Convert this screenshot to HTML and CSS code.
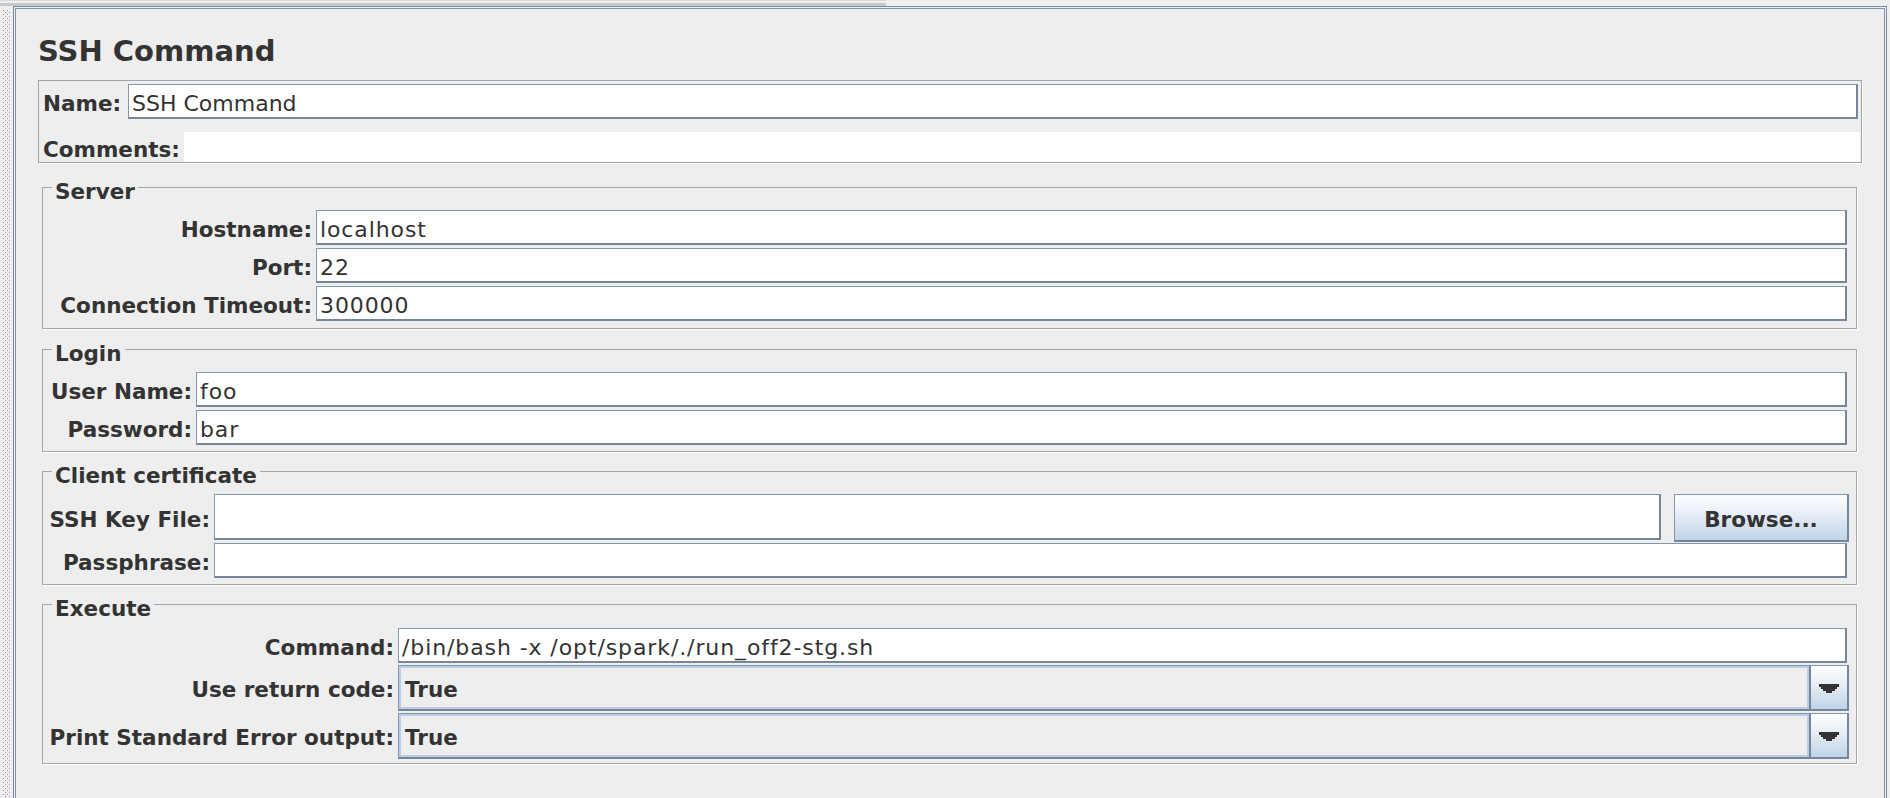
FILE: index.html
```html
<!DOCTYPE html>
<html lang="en">
<head>
<meta charset="utf-8">
<title>SSH Command</title>
<link rel="stylesheet" href="styles.css">
</head>
<body>
<div class="app">
  <div class="topstrip"><div class="thumb"></div></div>
  <div class="main">
    <div class="grip">
      <svg class="grip-dots" width="8" height="800" viewBox="0 0 8 800" aria-hidden="true">
        <defs>
          <pattern id="dots" width="4" height="4" patternUnits="userSpaceOnUse">
            <rect x="0" y="0" width="1" height="1" fill="#8a9bb0"/>
            <rect x="2" y="2" width="1" height="1" fill="#8a9bb0"/>
          </pattern>
        </defs>
        <rect x="0" y="0" width="8" height="800" fill="url(#dots)"/>
      </svg>
    </div>
    <div class="panel">
      <h1 class="title">SSH Command</h1>
      <div class="namebox">
        <div class="namerow">
          <div class="lbl lbl-left name-lbl">Name:</div>
          <div class="field field-name">SSH Command</div>
        </div>
        <div class="commentsrow">
          <div class="lbl lbl-left comments-lbl">Comments:</div>
          <div class="textarea"></div>
        </div>
      </div>

      <fieldset class="group group-server">
        <legend>Server</legend>
        <div class="grid">
          <div class="lbl">Hostname:</div><div class="field">localhost</div>
          <div class="lbl">Port:</div><div class="field">22</div>
          <div class="lbl">Connection Timeout:</div><div class="field">300000</div>
        </div>
      </fieldset>

      <fieldset class="group group-login">
        <legend>Login</legend>
        <div class="grid">
          <div class="lbl">User Name:</div><div class="field">foo</div>
          <div class="lbl">Password:</div><div class="field">bar</div>
        </div>
      </fieldset>

      <fieldset class="group group-cert">
        <legend>Client certificate</legend>
        <div class="grid">
          <div class="lbl lbl-center">SSH Key File:</div>
          <div class="keyrow">
            <div class="field field-tall"></div>
            <button class="btn" type="button">Browse...</button>
          </div>
          <div class="lbl">Passphrase:</div><div class="field"></div>
        </div>
      </fieldset>

      <fieldset class="group group-exec">
        <legend>Execute</legend>
        <div class="grid">
          <div class="lbl">Command:</div><div class="field">/bin/bash -x /opt/spark/./run_off2-stg.sh</div>
          <div class="lbl">Use return code:</div>
          <div class="combo">
            <div class="combo-value">True</div>
            <div class="combo-arrow">
              <svg width="20" height="9" viewBox="0 0 20 9" aria-hidden="true"><path d="M0 0H20V3H18V5H16V7H13V9H7V7H4V5H2V3H0Z" fill="#333"/></svg>
            </div>
          </div>
          <div class="lbl">Print Standard Error output:</div>
          <div class="combo">
            <div class="combo-value">True</div>
            <div class="combo-arrow">
              <svg width="20" height="9" viewBox="0 0 20 9" aria-hidden="true"><path d="M0 0H20V3H18V5H16V7H13V9H7V7H4V5H2V3H0Z" fill="#333"/></svg>
            </div>
          </div>
        </div>
      </fieldset>
    </div>
  </div>
</div>
</body>
</html>
```

FILE: styles.css
```css
* { box-sizing: border-box; }

html, body {
  margin: 0;
  padding: 0;
}

body {
  width: 1890px;
  height: 798px;
  overflow: hidden;
  background: #eeeeee;
  color: #333333;
  font-family: "DejaVu Sans", "Liberation Sans", sans-serif;
}

.topstrip {
  height: 6px;
}

.thumb {
  width: 886px;
  height: 6px;
  background: linear-gradient(#dcdcdc 0 1px, #eeeeee 1px 3px, #c8c8c8 3px 6px);
}

.main {
  display: flex;
  height: 792px;
}

.grip {
  flex: none;
  width: 13px;
  padding: 4px 2px 0 3px;
  overflow: hidden;
}

.grip-dots {
  display: block;
}

.panel {
  flex: none;
  width: 1874px;
  height: 800px;
  border: 1px solid #7b8a9c;
  box-shadow: inset 0 0 0 1px #eeeeee, inset 0 0 0 2px #8595a7;
  padding: 27px 24px 0 24px;
}

.title {
  margin: 0;
  height: 34px;
  font-size: 29px;
  line-height: 34px;
  font-weight: bold;
}

/* Name / comments box */
.namebox {
  margin-top: 12px;
  border: 1px solid #a3a3a3;
  box-shadow: 1px 1px 0 #ffffff;
  padding: 3px 0 0 4px;
}

.namerow {
  display: flex;
  align-items: baseline;
  padding-right: 3px;
}

.name-lbl {
  width: 85px;
  flex: none;
}

.commentsrow {
  display: flex;
  align-items: flex-end;
  margin-top: 13px;
  height: 30px;
}

.comments-lbl {
  width: 141px;
  flex: none;
}

.textarea {
  flex: 1;
  align-self: stretch;
  margin-right: 1px;
  background: #ffffff;
}

/* Labels */
.lbl {
  display: flex;
  justify-content: flex-end;
  font-size: 21.5px;
  line-height: 25px;
  font-weight: bold;
  white-space: nowrap;
}

.lbl-left {
  justify-content: flex-start;
}

.lbl-center {
  align-self: center;
  padding-top: 3px;
}

/* Text fields */
.field {
  flex: 1;
  min-width: 0;
  height: 35px;
  background: #ffffff;
  border-style: solid;
  border-width: 1px 2px 2px 1px;
  border-color: #8797a9 #76869a #76869a #8797a9;
  padding: 6px 3px 0 3px;
  font-size: 22px;
  line-height: 26px;
  letter-spacing: 0.9px;
  white-space: nowrap;
  overflow: hidden;
}

.field-name {
  letter-spacing: 0;
}

.field:empty::before {
  content: "\00a0";
}

.field-tall {
  height: 46px;
}

/* Titled groups */
.group {
  margin: 3px 5px 0 4px;
  padding: 0;
  min-inline-size: 0;
  border: 1px solid #a5a5a5;
  box-shadow: 1px 1px 0 #ffffff;
}

.group-server {
  margin-top: 8px;
}

.group-login {
  margin-top: 4px;
}

.group legend {
  margin-left: 9px;
  padding: 8px 3px 0 3px;
  font-size: 21.5px;
  line-height: 25px;
  font-weight: bold;
}

.grid {
  display: grid;
  grid-template-columns: var(--lw) 1fr;
  column-gap: 4px;
  row-gap: 3px;
  align-items: baseline;
  padding: 6px 9px 6px 9px;
}

.group-server .grid { --lw: 260px; padding-bottom: 7px; }
.group-login .grid { --lw: 140px; }
.group-cert .grid { --lw: 158px; row-gap: 1px; }
.group-exec .grid { --lw: 342px; row-gap: 2px; padding-top: 7px; padding-bottom: 4px; }

.keyrow {
  display: flex;
  align-items: flex-start;
  align-self: center;
  margin-right: -2px;
}

.btn {
  flex: none;
  width: 175px;
  height: 48px;
  margin-left: 13px;
  padding: 3px 0 0 0;
  border-style: solid;
  border-width: 1px 2px 2px 1px;
  border-color: #8797a9 #76869a #76869a #8797a9;
  background: linear-gradient(#fdfeff 0%, #eef3f9 30%, #c2d3e7 100%);
  color: #333333;
  font-family: inherit;
  font-size: 21.5px;
  font-weight: bold;
  line-height: 25px;
}

/* Combo boxes */
.combo {
  display: flex;
  height: 46px;
  margin-right: -2px;
  border-style: solid;
  border-width: 1px 2px 2px 1px;
  border-color: #8797a9 #76869a #76869a #8797a9;
  background: #eeeeee;
}

.combo-value {
  flex: 1;
  display: flex;
  align-items: center;
  padding: 3px 0 0 6px;
  box-shadow: inset 0 0 0 2px #b9cde4;
  font-size: 21.5px;
  line-height: 25px;
  font-weight: bold;
}

.combo-arrow {
  flex: none;
  width: 38px;
  display: flex;
  align-items: center;
  justify-content: center;
  border-left: 2px solid #76869a;
  background: linear-gradient(#fdfeff 0%, #eef3f9 30%, #c2d3e7 100%);
}

.combo-arrow svg {
  display: block;
  margin-top: 2px;
}
```
